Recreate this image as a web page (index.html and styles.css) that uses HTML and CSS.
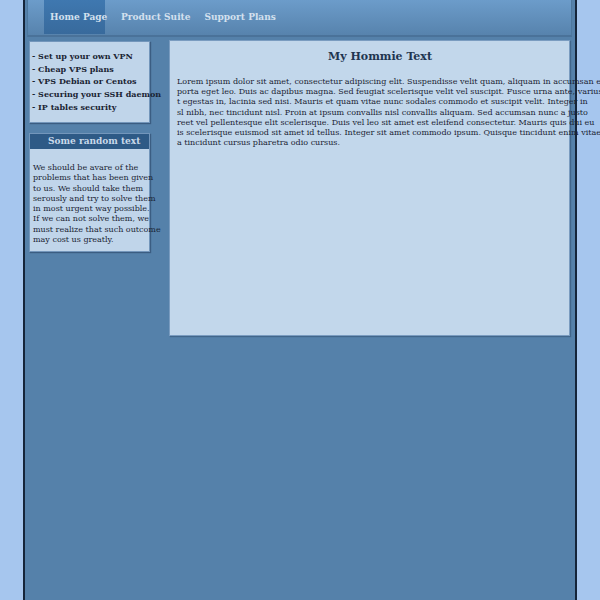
FILE: index.html
```html
<!DOCTYPE html>
<html>
<head>
<meta charset="utf-8">
<link rel="stylesheet" href="styles.css">
</head>
<body>
<div class="wrapper">
  <div class="header">
    <a class="tab active">Home Page</a>
    <a class="tab">Product Suite</a>
    <a class="tab">Support Plans</a>
  </div>
  <div class="content">
    <div class="sidebar">
      <div class="box links">
        <ul>
          <li>- Set up your own VPN</li>
          <li>- Cheap VPS plans</li>
          <li>- VPS Debian or Centos</li>
          <li>- Securing your SSH daemon</li>
          <li>- IP tables security</li>
        </ul>
      </div>
      <div class="box random">
        <div class="box-title">Some random text</div>
        <p>We should be avare of the problems that has been given to us. We should take them serously and try to solve them in most urgent way possible.<br>If we can not solve them, we must realize that such outcome may cost us greatly.</p>
      </div>
    </div>
    <div class="main">
      <h1>My Hommie Text</h1>
      <div class="lorem">
        <div>Lorem ipsum dolor sit amet, consectetur adipiscing elit. Suspendisse velit quam, aliquam in accumsan e</div>
        <div>porta eget leo. Duis ac dapibus magna. Sed feugiat scelerisque velit vel suscipit. Fusce urna ante, varius</div>
        <div>t egestas in, lacinia sed nisi. Mauris et quam vitae nunc sodales commodo et suscipit velit. Integer in</div>
        <div>sl nibh, nec tincidunt nisl. Proin at ipsum convallis nisl convallis aliquam. Sed accumsan nunc a justo</div>
        <div>reet vel pellentesque elit scelerisque. Duis vel leo sit amet est eleifend consectetur. Mauris quis dui eu</div>
        <div>is scelerisque euismod sit amet id tellus. Integer sit amet commodo ipsum. Quisque tincidunt enim vitae</div>
        <div>a tincidunt cursus pharetra odio cursus.</div>
      </div>
    </div>
  </div>
</div>
</body>
</html>
```
FILE: styles.css
```css
html {
  overflow: hidden;
}
body {
  margin: 0;
  background: #a6c6ee;
  font-family: "DejaVu Serif", serif;
  color: #1a2433;
}
.wrapper {
  width: 550px;
  height: 600px;
  margin: 0 auto;
  background: #5581aa;
  border-left: 2px solid #15253a;
  border-right: 2px solid #15253a;
}
.header {
  margin: 0 3px 0 2px;
  display: flex;
  padding-left: 16px;
  background: linear-gradient(#6c9cca, #5783ad);
  border: 1px solid #4d789f;
  border-top: none;
  border-bottom: 2px solid #4a7299;
  box-sizing: border-box;
  height: 37px;
}
.tab {
  display: flex;
  align-items: center;
  padding: 0 0 0 14px;
  font-size: 9px;
  font-weight: bold;
  color: #d3e0ee;
  height: 34px;
  white-space: nowrap;
}
.tab.active {
  width: 61px;
  box-sizing: border-box;
  padding-left: 6px;
  margin-right: 2px;
  background: linear-gradient(#3f78b0, #386a9c);
}
.content {
  display: flex;
  padding: 3px 4px 0 4px;
  gap: 19px;
}
.sidebar {
  width: 121px;
  display: flex;
  flex-direction: column;
  gap: 10px;
  padding-top: 1px;
}
.box {
  background: #c0d5ea;
  border: 1px solid #7396bb;
  box-shadow: 1px 1px 1px rgba(20, 40, 70, 0.4);
  width: 119px;
}
.links {
  height: 80px;
}
.links ul {
  list-style: none;
  margin: 0;
  padding: 8px 0 0 2px;
  white-space: nowrap;
}
.links li {
  font-size: 8px;
  font-weight: bold;
  line-height: 12.7px;
}
.random {
  height: 117px;
}
.box-title {
  background: #2e5a86;
  color: #c9d9ea;
  font-size: 9px;
  font-weight: bold;
  width: 119px;
  height: 15px;
  line-height: 15px;
  padding-left: 18px;
  box-sizing: border-box;
  white-space: nowrap;
}
.random p {
  margin: 0;
  padding: 14px 0 0 3px;
  width: 128px;
  font-size: 8px;
  line-height: 10.3px;
}
.main {
  width: 399px;
  height: 294px;
  background: #c2d7eb;
  border: 1px solid #7a9cc0;
  box-shadow: 1px 1px 1px rgba(20, 40, 70, 0.3);
}
.main h1 {
  margin: 8px 0 0 0;
  width: 420px;
  text-align: center;
  font-size: 11px;
  font-weight: bold;
  color: #1e3550;
  line-height: 16px;
}
.lorem {
  padding: 12px 0 0 7px;
  font-size: 8px;
  line-height: 10.2px;
  white-space: nowrap;
}
```
